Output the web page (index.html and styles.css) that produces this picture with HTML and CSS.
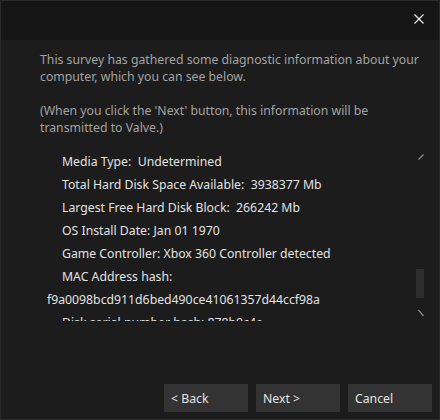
FILE: index.html
```html
<!DOCTYPE html>
<html>
<head>
<meta charset="utf-8">
<link rel="stylesheet" href="styles.css">
</head>
<body>
<div class="window">
  <div class="titlebar">
    <button class="close" aria-label="Close">
      <svg width="10" height="10" viewBox="0 0 10 10"><path d="M0.5 0.5L9.5 9.5M9.5 0.5L0.5 9.5" stroke="#ececec" stroke-width="1.3" fill="none"/></svg>
    </button>
  </div>
  <div class="content">
    <p class="intro">This survey has gathered some diagnostic information about your computer, which you can see below.</p>
    <p class="intro">(When you click the 'Next' button, this information will be transmitted to Valve.)</p>
    <div class="listbox">
      <div class="items">
        <div class="item">Media Type:&nbsp; Undetermined</div>
        <div class="item">Total Hard Disk Space Available:&nbsp; 3938377 Mb</div>
        <div class="item">Largest Free Hard Disk Block:&nbsp; 266242 Mb</div>
        <div class="item">OS Install Date: Jan 01 1970</div>
        <div class="item">Game Controller: Xbox 360 Controller detected</div>
        <div class="item">MAC Address hash:</div>
        <div class="item hash">f9a0098bcd911d6bed490ce41061357d44ccf98a</div>
        <div class="item">Disk serial number hash: 878b9c4e</div>
      </div>
      <div class="scrollbar">
        <svg class="arrow up" width="8" height="8" viewBox="0 0 8 8"><path d="M2.5 6.5L7.5 1.5" stroke="#8c8c8c" stroke-width="1.2" fill="none"/></svg>
        <div class="spacer"></div>
        <div class="thumb"></div>
        <svg class="arrow down" width="8" height="8" viewBox="0 0 8 8"><path d="M2.5 1L7.5 7" stroke="#8c8c8c" stroke-width="1.2" fill="none"/></svg>
      </div>
    </div>
  </div>
  <div class="footer">
    <button class="btn">&lt; Back</button>
    <button class="btn">Next &gt;</button>
    <button class="btn">Cancel</button>
  </div>
</div>
</body>
</html>
```
FILE: styles.css
```css
* { box-sizing: border-box; }
html, body { margin: 0; padding: 0; background: #1c1c1c; }
body { font-family: "Noto Sans", "Open Sans", sans-serif; font-size: 12.25px; }
.window {
  width: 440px; height: 420px;
  border: 1px solid #2a2a2a;
  background: #1c1c1c;
  display: flex; flex-direction: column;
}
.titlebar {
  height: 39px; background: #151515;
  display: flex; justify-content: flex-end; align-items: flex-start;
}
.close {
  background: none; border: 0; padding: 0;
  width: 10px; height: 10px;
  margin: 13px 15px 0 0;
  display: flex;
}
.content { padding: 11px 0 0 39px; }
.intro {
  margin: 0 0 17px 0;
  color: #a3a3a3;
  line-height: 17px;
  width: 384px;
}
.intro:last-of-type { margin-bottom: 0; }
.listbox {
  margin-top: 14px;
  height: 171px;
  display: flex;
}
.items { flex: 1; overflow: hidden; }
.item {
  line-height: 23px;
  color: #e2e2e2;
  padding-left: 22px;
  white-space: nowrap;
}
.item.hash { padding-left: 7px; }
.scrollbar {
  width: 8px; margin-right: 15px;
  display: flex; flex-direction: column; align-items: flex-end;
}
.arrow { display: block; flex: none; }
.arrow.up { margin-top: 3px; }
.arrow.down { margin-bottom: 4px; }
.spacer { flex: 1; }
.thumb { width: 8px; height: 29px; background: #2e2e2e; margin-bottom: 11px; flex: none; }
.footer {
  margin-top: auto;
  display: flex; justify-content: flex-end; gap: 8px;
  padding: 0 7px 7px 0;
}
.btn {
  width: 84px; height: 28px;
  background: #333333; border: 0;
  color: #e4e4e4;
  font-family: inherit; font-size: 12.25px;
  text-align: left; padding: 0 0 0 7px;
}
```
